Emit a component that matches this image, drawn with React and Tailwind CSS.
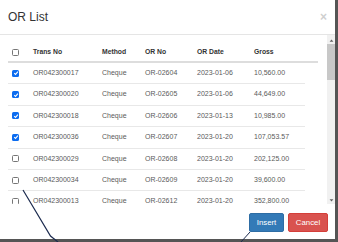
import React from "react";

const rows = [
  { trans: "OR042300017", method: "Cheque", orNo: "OR-02604", date: "2023-01-06", gross: "10,560.00", checked: true },
  { trans: "OR042300020", method: "Cheque", orNo: "OR-02605", date: "2023-01-06", gross: "44,649.00", checked: true },
  { trans: "OR042300018", method: "Cheque", orNo: "OR-02606", date: "2023-01-13", gross: "10,985.00", checked: true },
  { trans: "OR042300036", method: "Cheque", orNo: "OR-02607", date: "2023-01-20", gross: "107,053.57", checked: true },
  { trans: "OR042300029", method: "Cheque", orNo: "OR-02608", date: "2023-01-20", gross: "202,125.00", checked: false },
  { trans: "OR042300034", method: "Cheque", orNo: "OR-02609", date: "2023-01-20", gross: "39,600.00", checked: false },
  { trans: "OR042300013", method: "Cheque", orNo: "OR-02612", date: "2023-01-20", gross: "352,800.00", checked: false },
];

const cols = "grid grid-cols-[25px_69px_43px_52px_57px_64px] items-center";

function Check({ checked }) {
  if (checked) {
    return (
      <span className="flex h-[7px] w-[7px] items-center justify-center rounded-[1.5px] bg-[#0b6cf0]">
        <svg viewBox="0 0 10 10" className="h-[6px] w-[6px]" aria-hidden="true">
          <path d="M2 5.2 L4.2 7.3 L8.2 2.8" fill="none" stroke="white" strokeWidth="1.8" />
        </svg>
      </span>
    );
  }
  return <span className="block h-[7px] w-[7px] rounded-[1.5px] border border-[#767676] bg-white" />;
}

export default function App() {
  return (
    <div className="relative h-[242px] w-[338px] overflow-hidden bg-[#555] font-['Liberation_Sans',Arial,sans-serif]">
      <div className="flex h-[239px] w-[335px] flex-col bg-white">
        <div className="flex h-[35px] shrink-0 items-center justify-between border-b border-[#e5e5e5] pl-[8px] pr-[8px]">
          <h4 className="text-[12px] leading-none text-[#333]">OR List</h4>
          <span className="text-[12px] font-bold leading-none text-[#cfcfcf]">×</span>
        </div>

        <div className="flex h-[169px] shrink-0">
          <div className="min-w-0 flex-1 overflow-hidden px-[8px] pt-[8px]">
            <div className={`${cols} h-[20px] w-[310px] border-b-2 border-[#ddd] text-[6.8px] font-bold text-[#333]`}>
              <span className="pl-[4px]">
                <Check checked={false} />
              </span>
              <span>Trans No</span>
              <span>Method</span>
              <span>OR No</span>
              <span>OR Date</span>
              <span>Gross</span>
            </div>
            {rows.map((r) => (
              <div key={r.trans} className={`${cols} h-[21.4px] w-[297px] border-b border-[#e8e8e8] text-[7px] text-[#5a5a5a]`}>
                <span className="pl-[4px]">
                  <Check checked={r.checked} />
                </span>
                <span>{r.trans}</span>
                <span>{r.method}</span>
                <span>{r.orNo}</span>
                <span>{r.date}</span>
                <span>{r.gross}</span>
              </div>
            ))}
          </div>

          <div className="flex w-[8px] shrink-0 flex-col bg-[#f1f1f1] pt-[1px]">
            <div className="flex h-[8px] items-center justify-center">
              <svg viewBox="0 0 8 8" className="h-[5px] w-[5px]" aria-hidden="true">
                <path d="M1 6 L4 2.5 L7 6 Z" fill="#606060" />
              </svg>
            </div>
            <div className="h-[36px] bg-[#c8c8c8]" />
            <div className="flex-1" />
            <div className="flex h-[8px] items-center justify-center">
              <svg viewBox="0 0 8 8" className="h-[5px] w-[5px]" aria-hidden="true">
                <path d="M1 2 L4 5.5 L7 2 Z" fill="#606060" />
              </svg>
            </div>
          </div>
        </div>

        <div className="flex justify-end gap-[4px] pr-[7px] pt-[9px]">
          <button className="flex h-[19px] w-[35px] items-center justify-center rounded-[2px] border border-[#2e6da4] bg-[#337ab7] text-[7.8px] text-white">
            Insert
          </button>
          <button className="flex h-[19px] w-[40px] items-center justify-center rounded-[2px] border border-[#d43f3a] bg-[#d9534f] text-[7.8px] text-white">
            Cancel
          </button>
        </div>
      </div>

      <svg className="pointer-events-none absolute left-0 top-0" width="338" height="242" viewBox="0 0 338 242" aria-hidden="true">
        <path d="M23 190 L50.5 236 L58 242" fill="none" stroke="#1c2b4f" strokeWidth="1.2" />
        <path d="M241 242 L250 232" fill="none" stroke="#1c2b4f" strokeWidth="1" />
      </svg>
    </div>
  );
}
